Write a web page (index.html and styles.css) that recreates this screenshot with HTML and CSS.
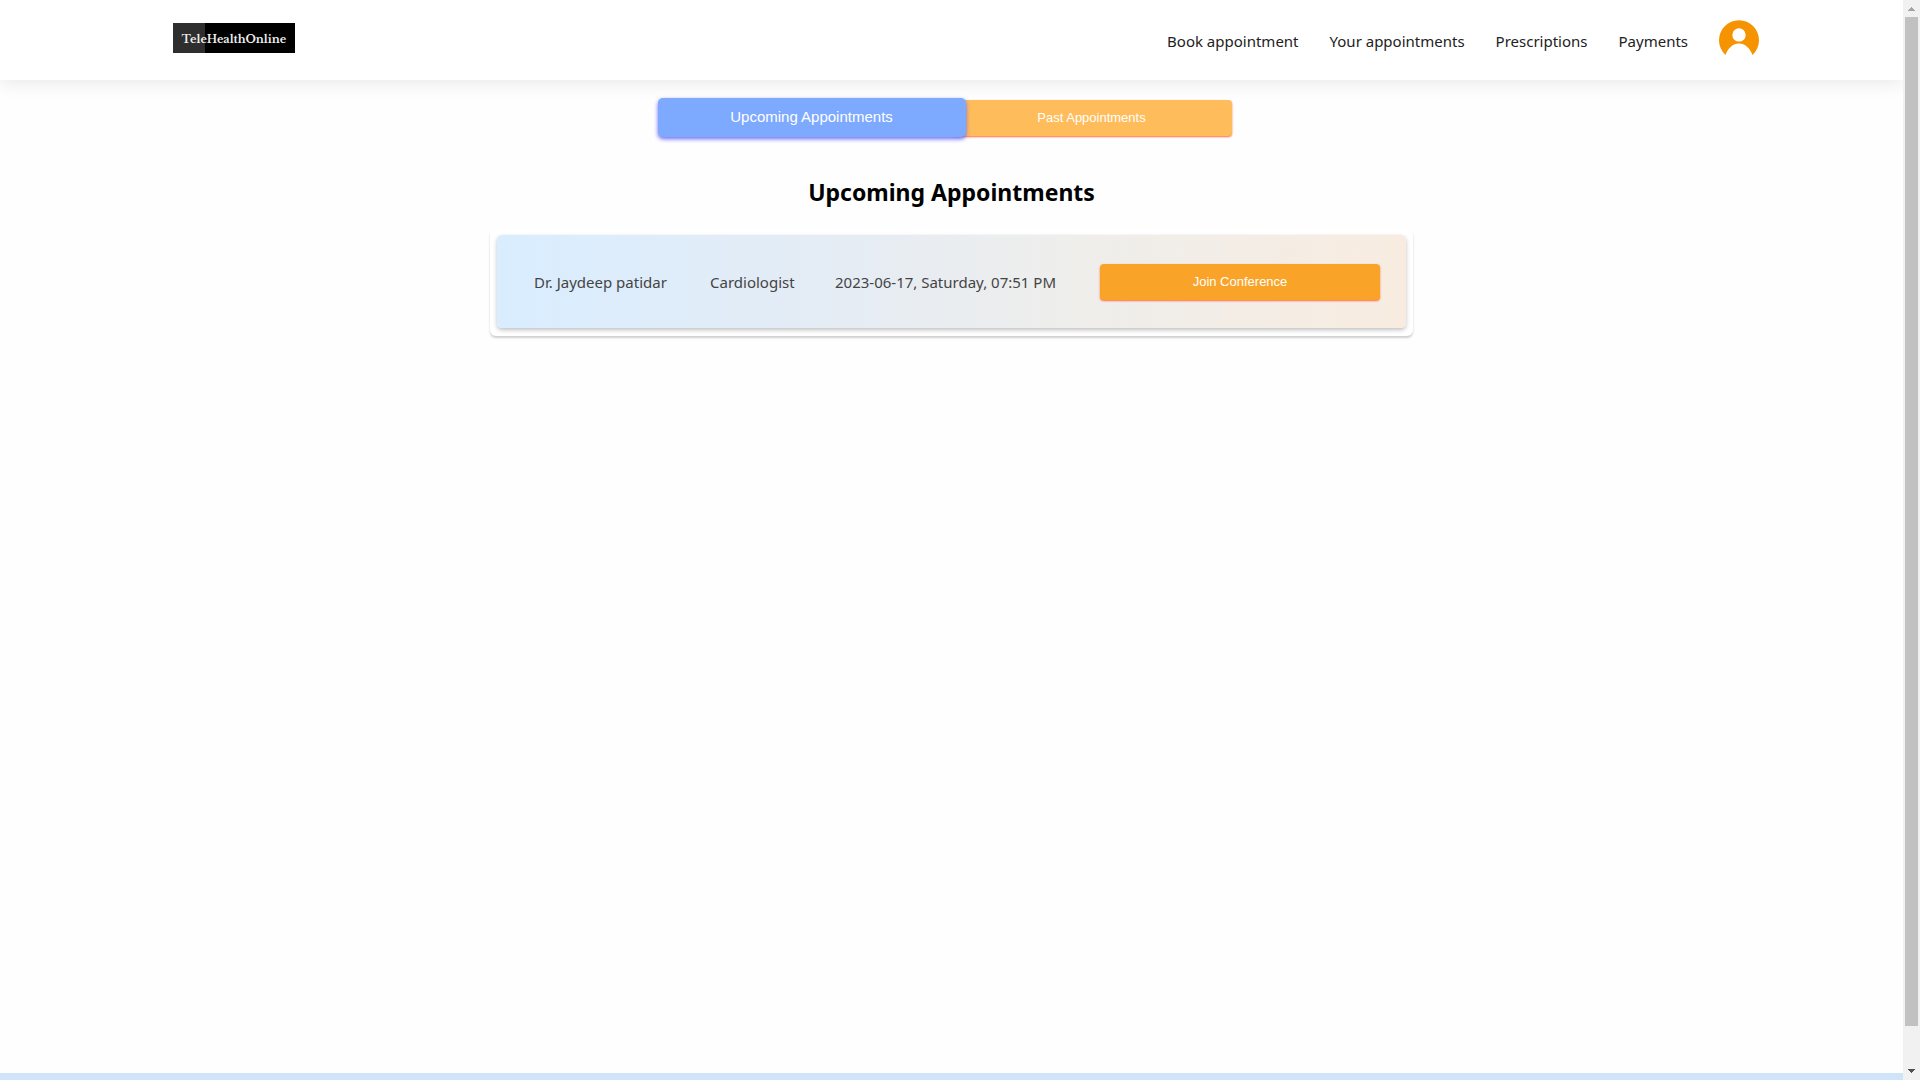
FILE: index.html
```
<!DOCTYPE html>
<html lang="en">
<head>
<meta charset="utf-8">
<meta name="viewport" content="width=device-width, initial-scale=1">
<title>TeleHealthOnline - Your appointments</title>
<link rel="stylesheet" href="styles.css">
</head>
<body>
<div class="page">
  <header class="navbar">
    <a class="logo" href="#">TeleHealthOnline</a>
    <nav class="nav-links">
      <a class="nav-link" href="#">Book appointment</a>
      <a class="nav-link" href="#">Your appointments</a>
      <a class="nav-link" href="#">Prescriptions</a>
      <a class="nav-link" href="#">Payments</a>
      <a class="avatar" href="#" aria-label="Profile">
        <svg viewBox="0 0 40 40" width="40" height="40" aria-hidden="true">
          <path fill="#f59300" fill-rule="evenodd" d="M6.500 35A20 20 0 1 1 33.500 35C31 28 26 23.500 20 23.500S9 28 6.500 35ZM20 8.200a6.700 6.700 0 1 0 0 13.400a6.700 6.700 0 0 0 0-13.400Z"/>
        </svg>
      </a>
    </nav>
  </header>
  <main class="content">
    <div class="tabs">
      <button class="button tab tab-active" type="button">Upcoming Appointments</button>
      <button class="button tab" type="button">Past Appointments</button>
    </div>
    <h1 class="title">Upcoming Appointments</h1>
    <section class="list">
      <article class="appointment">
        <span>Dr. Jaydeep patidar</span>
        <span>Cardiologist</span>
        <span>2023-06-17, Saturday, 07:51 PM</span>
        <button class="button join" type="button">Join Conference</button>
      </article>
    </section>
  </main>
  <footer class="footer"></footer>
</div>
<div class="scrollbar" aria-hidden="true">
  <svg class="arrow arrow-up" viewBox="0 0 7 4" width="7" height="4"><path d="M3 0h1v1h1v1h1v1h1v1H0V3h1V2h1V1h1Z"/></svg>
  <div class="thumb"></div>
  <svg class="arrow" viewBox="0 0 7 4" width="7" height="4"><path d="M0 0h7v1H6v1H5v1H4v1H3V3H2V2H1V1H0Z"/></svg>
</div>
</body>
</html>
```
FILE: styles.css
```
* {
  box-sizing: border-box;
}

body {
  margin: 0;
  min-height: 100vh;
  display: grid;
  grid-template-columns: minmax(0, 1fr) 17px;
  background: #fefefe;
  color: #333;
  font: 15px/24px "Noto Sans", sans-serif;
}

.page {
  display: flex;
  flex-direction: column;
}

.navbar {
  display: flex;
  justify-content: space-between;
  align-items: flex-start;
  height: 80px;
  padding: 20px 144px 0 173px;
  background: #fff;
  box-shadow: 0 4px 16px rgba(0, 0, 0, 0.08);
}

.logo {
  width: 122px;
  height: 30px;
  margin-top: 3px;
  background: linear-gradient(90deg, #2e2e2e 32px, #000 32px);
  color: #eee;
  font: bold 11px/32px "Libre Baskerville", "Liberation Serif", serif;
  text-align: center;
  text-decoration: none;
}

.nav-links {
  display: flex;
  align-items: center;
  gap: 31px;
}

.nav-link {
  padding-top: 2px;
  color: #222;
  text-decoration: none;
}

.avatar svg {
  display: block;
}

.content {
  flex: 1;
  display: flex;
  flex-direction: column;
  align-items: center;
  padding: 18px 16px;
}

.tabs {
  display: flex;
  align-items: center;
}

.button {
  width: 280px;
  height: 36px;
  padding: 0 16px;
  border: 0;
  border-radius: 4px;
  background: #f9a428;
  color: #fff;
  font: 500 13px/16px "Liberation Sans", Arial, sans-serif;
  box-shadow: 0 1px 2px #ff6a3c;
}

.tab {
  background: #ffbc5b;
}

.tab-active {
  z-index: 1;
  width: 308px;
  height: 39px;
  margin: 0 -14px;
  padding-bottom: 2px;
  border-radius: 5px;
  background: #7da9ff;
  font-size: 15px;
  box-shadow: 0 2px 4px #6a6af4;
}

.title {
  margin: 37px 0 19px;
  color: #000;
  font-size: 23px;
  line-height: 36px;
}

.list {
  padding: 6px 7px 8px;
  border-radius: 6px;
  background: #fff;
  box-shadow: 0 2px 2px rgba(60, 70, 80, 0.25);
}

.appointment {
  display: grid;
  grid-template-columns: minmax(136px, auto) minmax(85px, auto) minmax(225px, auto) auto;
  align-items: center;
  gap: 40px;
  min-height: 93px;
  padding: 0 26px 0 37px;
  border-radius: 5px;
  background: linear-gradient(90deg, #d9edff, #e5ecf4 38%, #eeeeec 62%, #f8ece0);
  color: #444;
  box-shadow: 0 2px 4px rgba(0, 0, 0, 0.25);
}

.footer {
  height: 7px;
  background: #cfe4f8;
}

.scrollbar {
  display: flex;
  flex-direction: column;
  align-items: center;
  gap: 6px;
  padding: 7px 0 7px;
  background: #f1f1f1;
}

.thumb {
  flex: 0 1 1009px;
  width: 13px;
  margin-bottom: auto;
  background: #c1c1c1;
}

.arrow {
  fill: #505050;
}

.arrow-up {
  fill: #a3a3a3;
}
```
